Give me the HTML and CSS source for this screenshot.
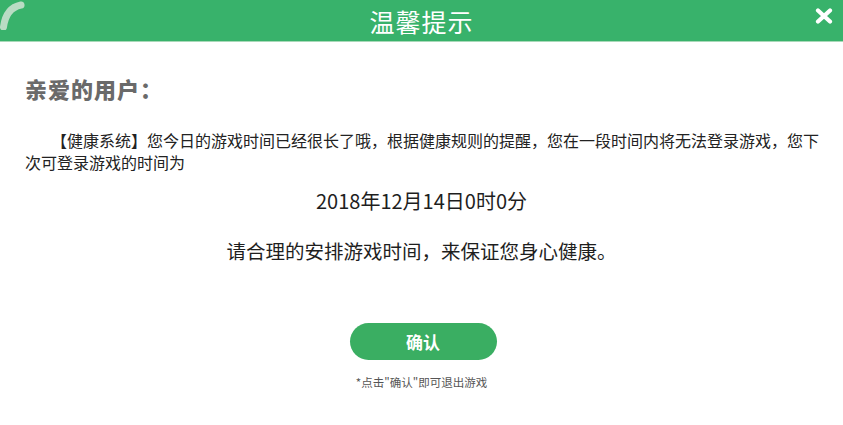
FILE: index.html
```html
<!DOCTYPE html>
<html lang="zh-CN">
<head>
<meta charset="utf-8">
<title>温馨提示</title>
<link rel="stylesheet" href="styles.css">
</head>
<body>
<div class="dialog">
  <header class="bar">
    <svg class="deco" width="30" height="30" viewBox="0 0 30 30" aria-hidden="true">
      <path d="M3.5 27 Q6 8 21 5" fill="none" stroke="#b9dcc4" stroke-width="7" stroke-linecap="round"/>
    </svg>
    <h1 class="bar-title">温馨提示</h1>
    <svg class="close" width="18" height="16" viewBox="0 0 18 16" aria-hidden="true">
      <path d="M3 2.5 L15 13.5 M15 2.5 L3 13.5" fill="none" stroke="#ffffff" stroke-width="4.2" stroke-linecap="round"/>
    </svg>
  </header>
  <main class="content">
    <h2 class="greet">亲爱的用户：</h2>
    <p class="msg">【健康系统】您今日的游戏时间已经很长了哦，根据健康规则的提醒，您在一段时间内将无法登录游戏，您下次可登录游戏的时间为</p>
    <p class="date">2018年12月14日0时0分</p>
    <p class="slogan">请合理的安排游戏时间，来保证您身心健康。</p>
    <div class="actions">
      <button class="ok">确认</button>
      <p class="hint">*点击"确认"即可退出游戏</p>
    </div>
  </main>
</div>
</body>
</html>
```
FILE: styles.css
```css
* { box-sizing: border-box; }
html, body { margin: 0; padding: 0; background: #ffffff; }
body {
  font-family: "Noto Sans CJK SC", "Noto Sans", sans-serif;
  color: #222;
  width: 843px;
  height: 425px;
  overflow: hidden;
}
.bar {
  position: relative;
  height: 42px;
  background: #38b26b;
  border-bottom: 1px solid #a8d9b8;
  display: flex;
  align-items: center;
  justify-content: center;
}
.deco { position: absolute; left: 0; top: 0; }
.close { position: absolute; left: 815px; top: 8px; }
.bar-title {
  margin: 0;
  font-size: 25px;
  font-weight: 400;
  color: #ffffff;
  line-height: 34px;
  letter-spacing: 1px;
}
.content { display: flex; flex-direction: column; }
.greet {
  margin: 31px 0 0 25px;
  font-size: 22px;
  line-height: 30px;
  font-weight: 900;
  color: #6a6a6a;
  letter-spacing: 1px;
}
.msg {
  margin: 26px 0 0 0;
  padding: 0 20px 0 25px;
  font-size: 16px;
  line-height: 22px;
  text-indent: 26px;
  color: #222;
}
.date {
  margin: 14px 0 0 0;
  text-align: center;
  font-size: 20px;
  line-height: 28px;
  color: #1e1e1e;
}
.slogan {
  margin: 22px 0 0 0;
  text-align: center;
  font-size: 19.5px;
  line-height: 28px;
  color: #1e1e1e;
}
.actions {
  display: flex;
  flex-direction: column;
  align-items: center;
  margin-top: 58px;
}
.ok {
  width: 147px;
  height: 37px;
  margin-left: 3px;
  border: none;
  border-radius: 19px;
  background: #3aae62;
  color: #ffffff;
  font-family: "Noto Sans CJK SC", sans-serif;
  font-size: 17px;
  font-weight: 700;
  padding: 0;
}
.hint {
  margin: 14px 0 0 0;
  font-size: 11.5px;
  line-height: 16px;
  color: #555;
}
```
